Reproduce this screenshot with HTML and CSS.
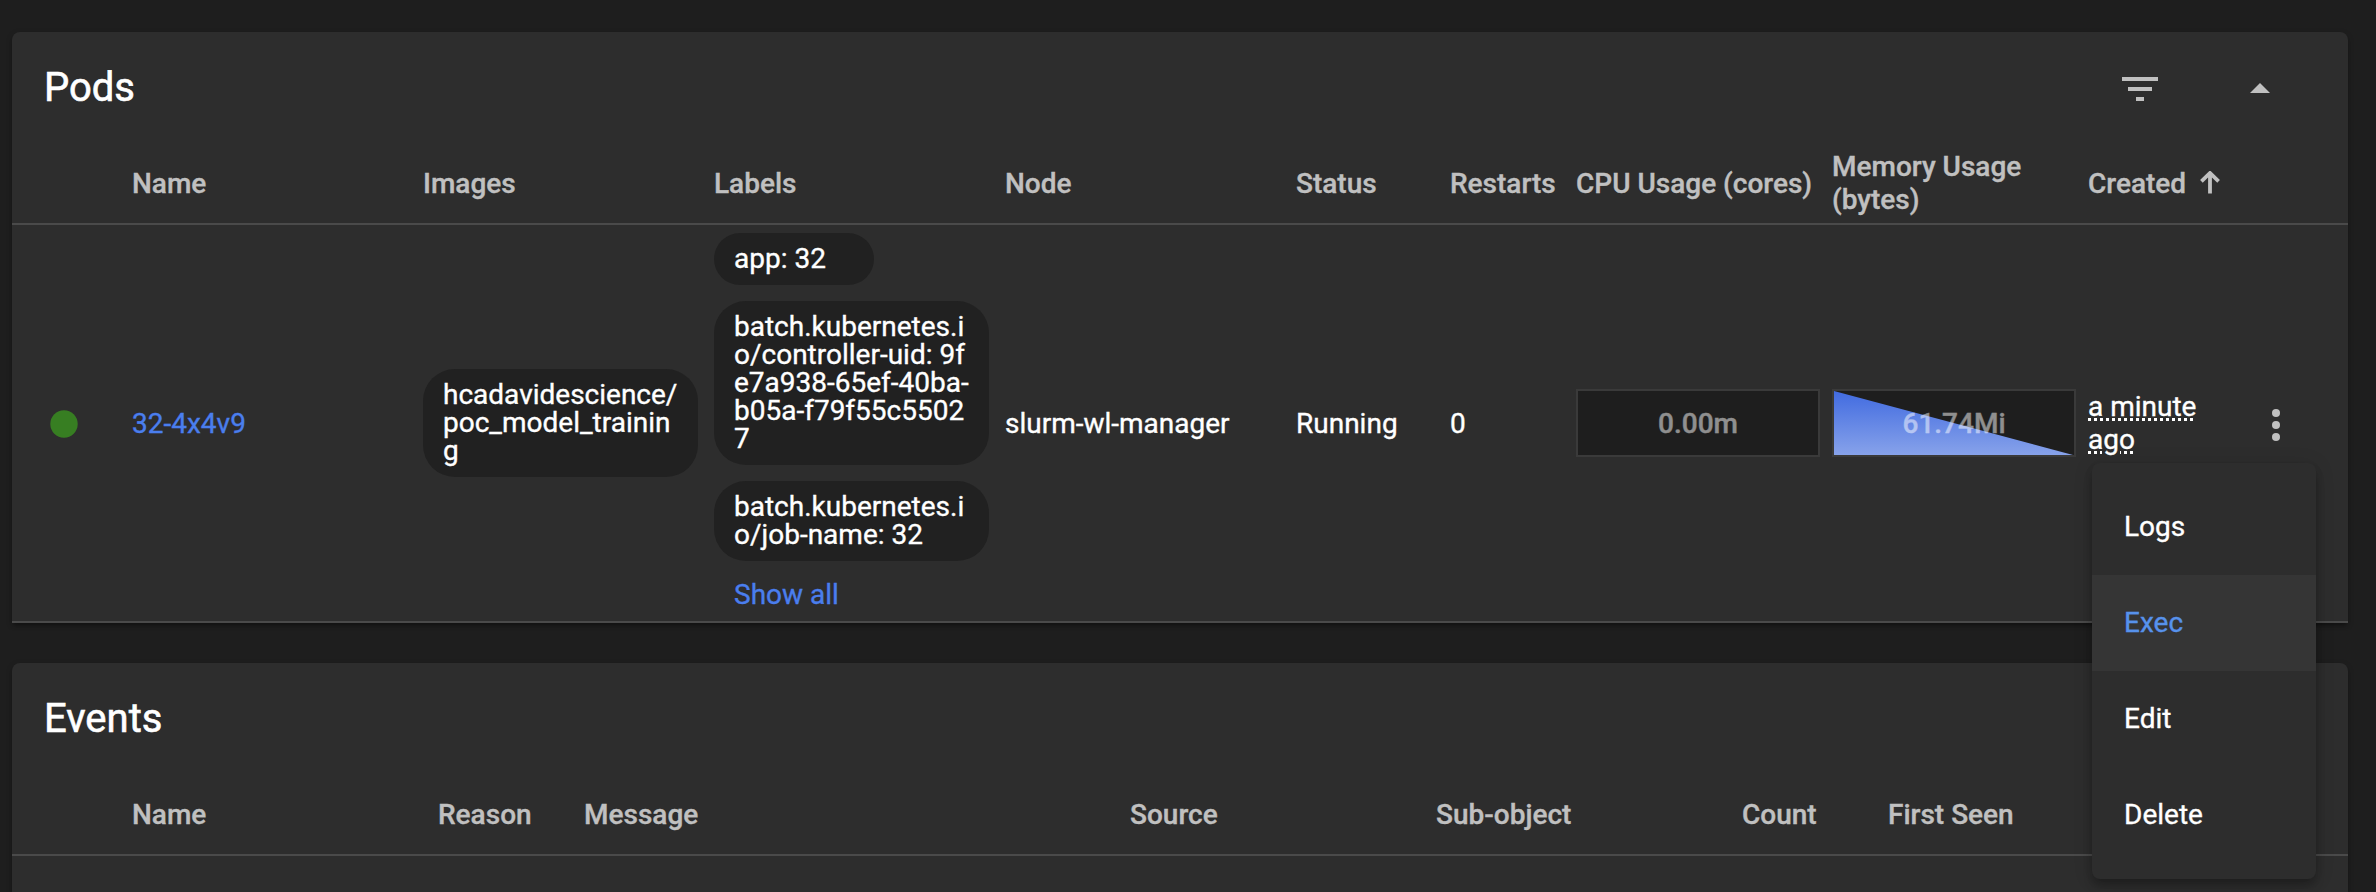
FILE: index.html
```html
<!DOCTYPE html>
<html lang="en">
<head>
<meta charset="utf-8">
<title>Pods</title>
<link rel="stylesheet" href="styles.css">
</head>
<body>
<main class="page">
  <section class="card">
    <header class="card-header">
      <h2 class="card-title">Pods</h2>
      <div class="card-actions">
        <svg class="icon" viewBox="0 0 24 24"><path d="M10 18h4v-2h-4v2zM3 6v2h18V6H3zm3 7h12v-2H6v2z"/></svg>
        <svg class="icon" viewBox="0 0 24 24"><path d="M7 14l5-5 5 5z"/></svg>
      </div>
    </header>
    <div class="row pods-grid head">
      <span></span>
      <span>Name</span>
      <span>Images</span>
      <span>Labels</span>
      <span>Node</span>
      <span>Status</span>
      <span>Restarts</span>
      <span>CPU Usage (cores)</span>
      <span>Memory Usage (bytes)</span>
      <span class="sorted">Created
        <svg class="sort-arrow" viewBox="0 0 20 23"><path d="M10 2.2V22.4M1.4 10.4L10 2l8.600 8.400"/></svg>
      </span>
      <span></span>
    </div>
    <div class="row pods-grid data">
      <svg class="status-dot" viewBox="0 0 28 28"><circle cx="14" cy="14" r="13.700"/></svg>
      <a class="link">32-4x4v9</a>
      <div class="chips"><span class="chip">hcadavidescience/<wbr>poc_model_training</span></div>
      <div class="chips labels">
        <span class="chip chip-short">app: 32</span>
        <span class="chip">batch.kubernetes.io/controller-uid: 9fe7a938-65ef-40ba-b05a-f79f55c55027</span>
        <span class="chip">batch.kubernetes.io/job-name: 32</span>
        <a class="link show-all">Show all</a>
      </div>
      <span>slurm-wl-manager</span>
      <span>Running</span>
      <span>0</span>
      <div class="meter"><span class="meter-value">0.00m</span></div>
      <div class="meter">
        <svg class="meter-area" viewBox="0 0 240 64" preserveAspectRatio="none">
          <defs><linearGradient id="area" x1="0" y1="0" x2="0" y2="1"><stop offset="0" stop-color="#416be0"/><stop offset="1" stop-color="#87a2ea"/></linearGradient></defs>
          <path d="M0 0L239 64H0z" fill="url(#area)"/>
        </svg>
        <span class="meter-value">61.74Mi</span>
      </div>
      <span class="created"><span class="age">a minute ago</span></span>
      <div class="row-menu">
        <svg class="icon" viewBox="0 0 24 24"><circle cx="12" cy="6" r="2"/><circle cx="12" cy="12" r="2"/><circle cx="12" cy="18" r="2"/></svg>
        <nav class="menu">
          <a class="menu-item">Logs</a>
          <a class="menu-item active">Exec</a>
          <a class="menu-item">Edit</a>
          <a class="menu-item">Delete</a>
        </nav>
      </div>
    </div>
  </section>
  <section class="card events">
    <header class="card-header"><h2 class="card-title">Events</h2></header>
    <div class="row events-grid head">
      <span></span>
      <span>Name</span>
      <span>Reason</span>
      <span>Message</span>
      <span>Source</span>
      <span>Sub-object</span>
      <span>Count</span>
      <span>First Seen</span>
    </div>
  </section>
</main>
</body>
</html>
```
FILE: styles.css
```css
* { box-sizing: border-box; }

body {
  margin: 0;
  background: #1e1e1e;
  color: #fff;
  font: 400 28px/33px Roboto, sans-serif;
  -webkit-text-stroke: .35px currentColor;
}

.page {
  display: flex;
  flex-direction: column;
  gap: 40px;
  height: 892px;
  padding: 32px 28px 0 12px;
}

.card {
  flex: none;
  background: #2d2d2d;
  border-radius: 8px 8px 0 0;
  box-shadow: 0 4px 4px -2px rgba(0, 0, 0, .35), 0 2px 6px rgba(0, 0, 0, .2);
}

.events {
  flex: 1;
  min-height: 0;
}

.card-header {
  display: flex;
  align-items: center;
  justify-content: space-between;
  height: 111px;
  padding: 0 64px 0 32px;
}

.card-title {
  margin: 0;
  font-size: 40px;
  font-weight: 400;
  -webkit-text-stroke-width: .6px;
  line-height: 48px;
}

.card-actions {
  display: flex;
  gap: 72px;
  padding-top: 3px;
}

.icon {
  display: block;
  width: 48px;
  height: 48px;
  fill: #c0c0c0;
}

.row {
  display: grid;
  align-items: center;
  border-bottom: 2px solid #4a4a4a;
}

.pods-grid { grid-template-columns: 120px 291px 291px 291px 291px 154px 126px 256px 256px 148px 1fr; }

.events-grid { grid-template-columns: 120px 306px 146px 546px 306px 306px 146px 1fr; }

.head {
  height: 82px;
  color: #c0c0c0;
  font-weight: 500;
}

.sorted {
  display: flex;
  align-items: center;
  white-space: nowrap;
}

.sort-arrow {
  flex: none;
  width: 20px;
  height: 23px;
  margin: 0 0 2px 14px;
  fill: none;
  stroke: #c0c0c0;
  stroke-width: 3.8;
}

.data { height: 398px; }

.status-dot {
  width: 28px;
  height: 28px;
  margin: 2px 0 0 38px;
  fill: #377e22;
}

.link { color: #4a7eee; }

.chips {
  display: flex;
  flex-direction: column;
  align-items: flex-start;
  gap: 16px;
}

.labels {
  align-self: start;
  padding-top: 8px;
}

.chip {
  width: 275px;
  padding: 12px 20px;
  border-radius: 32px;
  background: #212121;
  line-height: 28px;
  word-break: break-all;
}

.chip-short { width: 160px; }

.show-all {
  padding: 0 20px;
  line-height: 36px;
}

.meter {
  display: grid;
  place-items: center;
  width: 244px;
  height: 68px;
  border: 2px solid #3a3a3a;
  background: #1e1e1e;
  color: #fff;
  font-weight: 500;
}

.meter-area, .meter-value { grid-area: 1 / 1; }

.meter-area {
  width: 240px;
  height: 64px;
}

.meter-value {
  z-index: 1;
  opacity: .5;
}

.created { width: 130px; }

.age {
  text-decoration: underline dotted 3px;
  text-underline-offset: 2px;
}

.row-menu {
  position: relative;
  padding: 4px 0 0 16px;
}

.menu {
  position: absolute;
  z-index: 2;
  top: 66px;
  right: 32px;
  width: 224px;
  padding: 16px 0;
  border-radius: 8px;
  background: #2d2d2d;
  box-shadow: 0 4px 8px -2px rgba(0, 0, 0, .2), 0 8px 10px rgba(0, 0, 0, .14), 0 2px 20px rgba(0, 0, 0, .12);
}

.menu-item {
  display: block;
  padding: 0 32px;
  line-height: 96px;
}

.active {
  background: #353535;
  color: #5792ec;
}
```
